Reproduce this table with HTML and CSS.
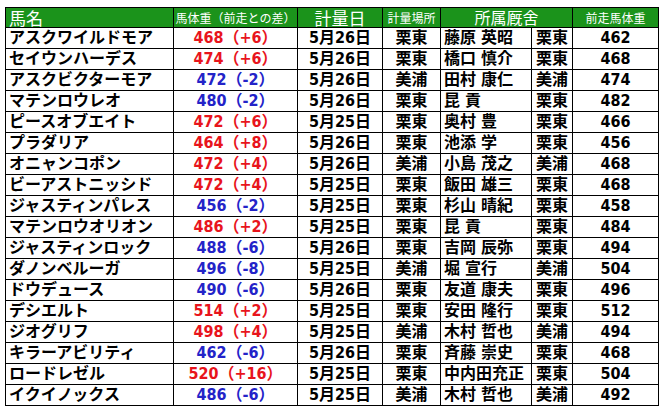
FILE: index.html
```html
<!DOCTYPE html>
<html lang="ja">
<head>
<meta charset="utf-8">
<link rel="stylesheet" href="styles.css">
</head>
<body>
<table class="tbl">
<colgroup>
<col class="c1"><col class="c2"><col class="c3"><col class="c4"><col class="c5"><col class="c6"><col class="c7">
</colgroup>
<thead>
<tr>
<th class="h-big h-left">馬名</th>
<th class="h-small">馬体重（前走との差）</th>
<th class="h-big">計量日</th>
<th class="h-small">計量場所</th>
<th class="h-mid" colspan="2">所属厩舍</th>
<th class="h-small">前走馬体重</th>
</tr>
</thead>
<tbody>
<tr><td class="name">アスクワイルドモア</td><td class="wt up">468（+6）</td><td class="ctr">5月26日</td><td class="ctr">栗東</td><td class="tr">藤原 英昭</td><td class="ctr">栗東</td><td class="ctr">462</td></tr>
<tr><td class="name">セイウンハーデス</td><td class="wt up">474（+6）</td><td class="ctr">5月26日</td><td class="ctr">栗東</td><td class="tr">橋口 慎介</td><td class="ctr">栗東</td><td class="ctr">468</td></tr>
<tr><td class="name">アスクビクターモア</td><td class="wt dn">472（-2）</td><td class="ctr">5月26日</td><td class="ctr">美浦</td><td class="tr">田村 康仁</td><td class="ctr">美浦</td><td class="ctr">474</td></tr>
<tr><td class="name">マテンロウレオ</td><td class="wt dn">480（-2）</td><td class="ctr">5月26日</td><td class="ctr">栗東</td><td class="tr">昆 貢</td><td class="ctr">栗東</td><td class="ctr">482</td></tr>
<tr><td class="name">ピースオブエイト</td><td class="wt up">472（+6）</td><td class="ctr">5月25日</td><td class="ctr">栗東</td><td class="tr">奥村 豊</td><td class="ctr">栗東</td><td class="ctr">466</td></tr>
<tr><td class="name">プラダリア</td><td class="wt up">464（+8）</td><td class="ctr">5月26日</td><td class="ctr">栗東</td><td class="tr">池添 学</td><td class="ctr">栗東</td><td class="ctr">456</td></tr>
<tr><td class="name">オニャンコポン</td><td class="wt up">472（+4）</td><td class="ctr">5月26日</td><td class="ctr">美浦</td><td class="tr">小島 茂之</td><td class="ctr">美浦</td><td class="ctr">468</td></tr>
<tr><td class="name">ビーアストニッシド</td><td class="wt up">472（+4）</td><td class="ctr">5月25日</td><td class="ctr">栗東</td><td class="tr">飯田 雄三</td><td class="ctr">栗東</td><td class="ctr">468</td></tr>
<tr><td class="name">ジャスティンパレス</td><td class="wt dn">456（-2）</td><td class="ctr">5月25日</td><td class="ctr">栗東</td><td class="tr">杉山 晴紀</td><td class="ctr">栗東</td><td class="ctr">458</td></tr>
<tr><td class="name">マテンロウオリオン</td><td class="wt up">486（+2）</td><td class="ctr">5月25日</td><td class="ctr">栗東</td><td class="tr">昆 貢</td><td class="ctr">栗東</td><td class="ctr">484</td></tr>
<tr><td class="name">ジャスティンロック</td><td class="wt dn">488（-6）</td><td class="ctr">5月26日</td><td class="ctr">栗東</td><td class="tr">吉岡 辰弥</td><td class="ctr">栗東</td><td class="ctr">494</td></tr>
<tr><td class="name">ダノンベルーガ</td><td class="wt dn">496（-8）</td><td class="ctr">5月25日</td><td class="ctr">美浦</td><td class="tr">堀 宣行</td><td class="ctr">美浦</td><td class="ctr">504</td></tr>
<tr><td class="name">ドウデュース</td><td class="wt dn">490（-6）</td><td class="ctr">5月26日</td><td class="ctr">栗東</td><td class="tr">友道 康夫</td><td class="ctr">栗東</td><td class="ctr">496</td></tr>
<tr><td class="name">デシエルト</td><td class="wt up">514（+2）</td><td class="ctr">5月25日</td><td class="ctr">栗東</td><td class="tr">安田 隆行</td><td class="ctr">栗東</td><td class="ctr">512</td></tr>
<tr><td class="name">ジオグリフ</td><td class="wt up">498（+4）</td><td class="ctr">5月25日</td><td class="ctr">美浦</td><td class="tr">木村 哲也</td><td class="ctr">美浦</td><td class="ctr">494</td></tr>
<tr><td class="name">キラーアビリティ</td><td class="wt dn">462（-6）</td><td class="ctr">5月26日</td><td class="ctr">栗東</td><td class="tr">斉藤 崇史</td><td class="ctr">栗東</td><td class="ctr">468</td></tr>
<tr><td class="name">ロードレゼル</td><td class="wt up">520（+16）</td><td class="ctr">5月25日</td><td class="ctr">栗東</td><td class="tr">中内田充正</td><td class="ctr">栗東</td><td class="ctr">504</td></tr>
<tr><td class="name">イクイノックス</td><td class="wt dn">486（-6）</td><td class="ctr">5月25日</td><td class="ctr">美浦</td><td class="tr">木村 哲也</td><td class="ctr">美浦</td><td class="ctr">492</td></tr>
</tbody>
</table>
</body>
</html>
```

FILE: styles.css
```css
html, body {
  margin: 0;
  padding: 0;
  background: #ffffff;
}
body {
  padding: 7px 0 0 5px;
  font-family: "Noto Sans CJK JP", "Noto Sans", sans-serif;
}
.tbl {
  border-collapse: collapse;
  table-layout: fixed;
  width: 653px;
}
.c1 { width: 168px; }
.c2 { width: 124px; }
.c3 { width: 85px; }
.c4 { width: 58px; }
.c5 { width: 91px; }
.c6 { width: 41px; }
.c7 { width: 86px; }
.tbl th, .tbl td {
  border: 1px solid #000;
  padding: 0;
  white-space: nowrap;
}
.tbl th {
  background: #1b931b;
  color: #ffffff;
  font-weight: 400;
  height: 19px;
  line-height: 19px;
  text-align: center;
}
.tbl th.h-left { text-align: left; padding-left: 3px; }
.h-big { font-size: 17px; }
.h-mid { font-size: 16px; }
.h-small { font-size: 12px; }
.tbl td {
  height: 20px;
  line-height: 20px;
  font-size: 16px;
  font-weight: 700;
  color: #000;
  font-family: "DejaVu Sans Condensed", "Noto Sans CJK JP", sans-serif;
}
.tbl td.name, .tbl td.tr { padding-left: 3px; }
.tbl td.ctr, .tbl td.wt { text-align: center; }
.tbl td.up { color: #e8141c; }
.tbl td.dn { color: #2323c8; }
```
